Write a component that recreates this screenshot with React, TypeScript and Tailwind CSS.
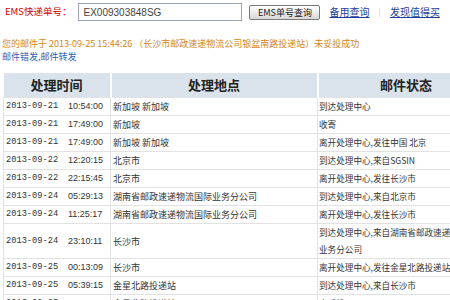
import React from "react";

const rows: { d: string; t: string; place: string; status: string }[] = [
  { d: "2013-09-21", t: "10:54:00", place: "新加坡 新加坡", status: "到达处理中心" },
  { d: "2013-09-21", t: "17:49:00", place: "新加坡", status: "收寄" },
  { d: "2013-09-21", t: "17:49:00", place: "新加坡 新加坡", status: "离开处理中心,发往中国 北京" },
  { d: "2013-09-22", t: "12:20:15", place: "北京市", status: "到达处理中心,来自SGSIN" },
  { d: "2013-09-22", t: "22:15:45", place: "北京市", status: "离开处理中心,发往长沙市" },
  { d: "2013-09-24", t: "05:29:13", place: "湖南省邮政速递物流国际业务分公司", status: "到达处理中心,来自北京市" },
  { d: "2013-09-24", t: "11:25:17", place: "湖南省邮政速递物流国际业务分公司", status: "离开处理中心,发往长沙市" },
  { d: "2013-09-24", t: "23:10:11", place: "长沙市", status: "到达处理中心,来自湖南省邮政速递物流国际业务分公司" },
  { d: "2013-09-25", t: "00:13:09", place: "长沙市", status: "离开处理中心,发往金星北路投递站" },
  { d: "2013-09-25", t: "05:39:15", place: "金星北路投递站", status: "到达处理中心,来自长沙市" },
  { d: "2013-09-25", t: "15:44:26", place: "金星北路投递站", status: "未妥投" },
];

const cjk = { fontFamily: '"Noto Sans CJK SC", "Noto Sans", sans-serif' };

export default function App() {
  return (
    <div className="w-[450px] h-[300px] overflow-hidden bg-white text-[#333]" style={cjk}>
      <div className="flex items-center h-[18px] mt-[3px]">
        <span className="ml-[5px] text-[9.5px] text-[#d40000] leading-none">EMS快递单号：</span>
        <div className="ml-[7px] w-[164px] h-[18px] border border-[#9aa3ad] flex items-center pl-[4px] text-[10px] text-[#444]" style={{ fontFamily: '"Liberation Sans", sans-serif' }}>
          EX009303848SG
        </div>
        <div className="ml-[7px] h-[15px] w-[71px] border border-[#7a7a7a] rounded-[2px] bg-gradient-to-b from-white to-[#d8d8d8] flex items-center justify-center text-[9px] text-[#222] leading-none">
          EMS单号查询
        </div>
        <span className="ml-[9px] text-[10px] text-[#1d3f9a] underline leading-none">备用查询</span>
        <span className="ml-[9px] mr-[9px] text-[9px] text-[#f2c6c6] leading-none">|</span>
        <span className="text-[10px] text-[#1d3f9a] underline leading-none">发现值得买</span>
      </div>
      <div className="mt-[16px] ml-[2px] text-[9px] leading-[13px] text-[#d4861a] whitespace-nowrap">
        您的邮件于 2013-09-25 15:44:26 （长沙市邮政速递物流公司银盆南路投递站）未妥投成功
      </div>
      <div className="ml-[2px] text-[9px] leading-[13px] text-[#2b5fb4] whitespace-nowrap">邮件错发,邮件转发</div>
      <table className="mt-[10px] ml-[3px] w-[490px] table-fixed border-collapse">
        <colgroup>
          <col className="w-[107px]" />
          <col className="w-[207px]" />
          <col className="w-[176px]" />
        </colgroup>
        <thead>
          <tr className="bg-[#dae2eb]">
            <th className="h-[24px] border-r-2 border-white text-[13px] leading-[24px] font-bold text-[#222] text-center p-0">处理时间</th>
            <th className="h-[24px] border-r-2 border-white text-[13px] leading-[24px] font-bold text-[#222] text-center p-0">处理地点</th>
            <th className="h-[24px] text-[13px] leading-[24px] font-bold text-[#222] text-center p-0">邮件状态</th>
          </tr>
        </thead>
        <tbody>
          {rows.map((r, i) => (
            <tr key={i}>
              <td className="border border-[#e2e2e2] p-0 pl-[2px] align-middle">
                <div className="flex items-center h-[17px] whitespace-nowrap">
                  <span className="w-[62px] text-[8.7px] leading-[17px]" style={{ fontFamily: '"Liberation Mono", monospace' }}>{r.d}</span>
                  <span className="text-[9px] leading-[17px]" style={{ fontFamily: '"Liberation Sans", sans-serif' }}>{r.t}</span>
                </div>
              </td>
              <td className="border border-[#e2e2e2] p-0 pl-[2px] align-middle text-[9px] leading-[17px]">{r.place}</td>
              <td className="border border-[#e2e2e2] p-0 pl-[1px] align-middle text-[8.6px] leading-[17px]">{r.status}</td>
            </tr>
          ))}
        </tbody>
      </table>
    </div>
  );
}
